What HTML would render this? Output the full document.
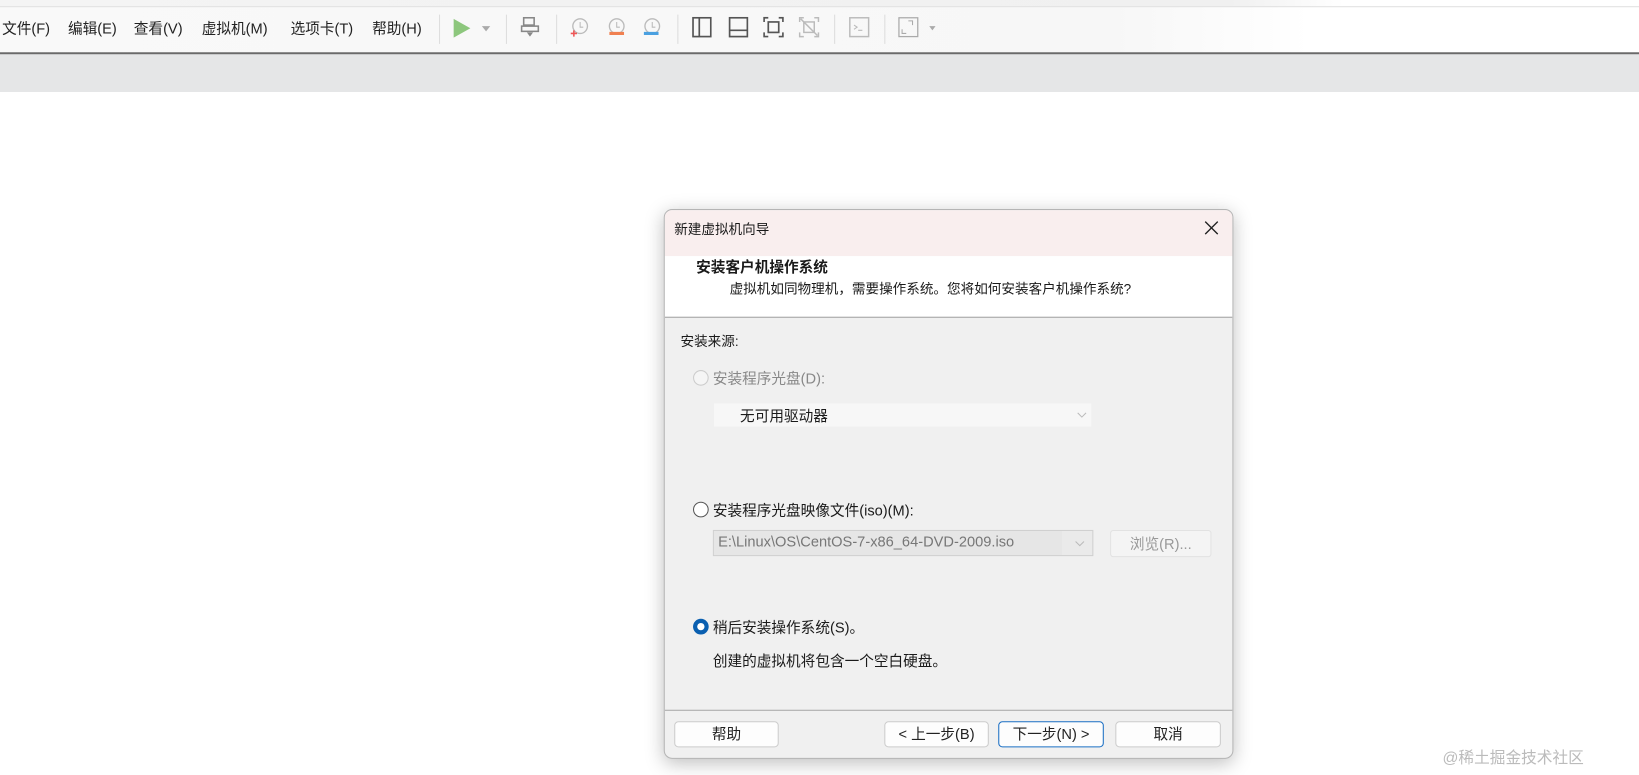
<!DOCTYPE html>
<html><head><meta charset="utf-8"><style>
*{margin:0;padding:0;box-sizing:border-box}
body{width:1639px;height:774px;overflow:hidden;background:#fff;position:relative;font-family:"Liberation Sans","Noto Sans CJK SC",sans-serif;font-size:14px;color:#1a1a1a}
#w{position:absolute;left:0;top:0;width:1568px;height:741px;transform:scale(1.04528);transform-origin:0 0}
.a{position:absolute}
.menu span{position:absolute;top:17px;font-size:14px;color:#222}
.sep{position:absolute;top:14px;width:1px;height:28px;background:#ddd}
.ic{position:absolute;top:16px;width:20px;height:20px}
.btn{position:absolute;top:690px;height:25px;background:#fdfdfd;border:1px solid #ccc;border-radius:4px;font-size:14px;text-align:center;line-height:23px;color:#222}
</style></head><body><div id="w">
<div class="a" style="left:0;top:0;width:1568px;height:6px;background:linear-gradient(90deg,#f4f4f4 0%,#f0f0f0 75%,#fff 82%)"></div>
<div class="a" style="left:0;top:6px;width:1568px;height:1px;background:#ddd"></div>
<div class="a" style="left:0;top:7px;width:1568px;height:44px;background:linear-gradient(90deg,#f9f9f9 0%,#f7f7f7 68%,#fff 80%)"></div>
<div class="menu">
<span style="left:2px">文件(F)</span><span style="left:65px">编辑(E)</span><span style="left:128px">查看(V)</span><span style="left:193px">虚拟机(M)</span><span style="left:278px">选项卡(T)</span><span style="left:356px">帮助(H)</span>
</div>
<div class="sep" style="left:420px"></div>
<svg class="a" style="left:432px;top:17px" width="40" height="20"><polygon points="2,1 18,10 2,19" fill="#8dc77d"/><polygon points="29,8 37,8 33,13" fill="#aaa"/></svg>
<div class="sep" style="left:484px"></div>
<svg class="ic" style="left:498px"><rect x="3" y="1" width="10" height="7" fill="none" stroke="#888" stroke-width="1.5"/><rect x="1" y="9" width="16" height="5" fill="none" stroke="#888" stroke-width="1.5"/><polygon points="6,15 12,15 9,19" fill="#888"/></svg>
<div class="sep" style="left:532px"></div>
<svg class="ic" style="left:545px"><circle cx="10" cy="9" r="7" fill="none" stroke="#bbb" stroke-width="1.3"/><path d="M10 5v5h3" stroke="#bbb" fill="none"/><path d="M1 16h6M4 13v6" stroke="#e55" stroke-width="1.5"/></svg>
<svg class="ic" style="left:580px"><circle cx="10" cy="9" r="7" fill="none" stroke="#bbb" stroke-width="1.3"/><path d="M10 5v5h3" stroke="#bbb" fill="none"/><path d="M3 16h14" stroke="#f08050" stroke-width="3"/></svg>
<svg class="ic" style="left:614px"><circle cx="10" cy="9" r="7" fill="none" stroke="#bbb" stroke-width="1.3"/><path d="M10 5v5h3" stroke="#bbb" fill="none"/><path d="M2 16h14" stroke="#4aa0e0" stroke-width="3"/></svg>
<div class="sep" style="left:648px"></div>
<svg class="ic" style="left:661px"><rect x="2" y="1" width="17" height="18" fill="none" stroke="#555" stroke-width="1.6"/><path d="M8 1v18" stroke="#555" stroke-width="1.6"/></svg>
<svg class="ic" style="left:696px"><rect x="2" y="1" width="17" height="18" fill="none" stroke="#555" stroke-width="1.6"/><path d="M2 13h17" stroke="#555" stroke-width="1.6"/></svg>
<svg class="ic" style="left:730px"><path d="M1 5V1h4M15 1h4v4M19 15v4h-4M5 19H1v-4" fill="none" stroke="#555" stroke-width="1.6"/><rect x="5" y="5" width="10" height="10" fill="none" stroke="#555" stroke-width="1.6"/></svg>
<svg class="ic" style="left:764px"><path d="M1 5V1h4M15 1h4v4M19 15v4h-4M5 19H1v-4M2 2l16 16" fill="none" stroke="#bbb" stroke-width="1.4"/><rect x="5" y="5" width="10" height="10" fill="none" stroke="#bbb" stroke-width="1.4"/></svg>
<div class="sep" style="left:798px"></div>
<svg class="ic" style="left:812px"><rect x="1" y="1" width="18" height="18" fill="none" stroke="#bbb" stroke-width="1.4"/><path d="M5 8l3 2-3 2M9 13h4" stroke="#bbb" fill="none"/></svg>
<div class="sep" style="left:846px"></div>
<svg class="ic" style="left:859px;width:40px"><rect x="1" y="1" width="18" height="18" fill="none" stroke="#aaa" stroke-width="1.2"/><path d="M10 4h4v4M4 12v4h4" stroke="#aaa" fill="none"/><polygon points="30,9 36,9 33,13" fill="#aaa"/></svg>
<div class="a" style="left:0;top:50px;width:1568px;height:2px;background:#6a6a6a"></div>
<div class="a" style="left:0;top:52px;width:1568px;height:36px;background:#e5e6e7"></div>

<div class="a" style="left:635px;top:200px;width:545px;height:526px;border:1px solid #b5b5b5;border-radius:8px;background:#f0f0f0;box-shadow:0 4px 18px rgba(0,0,0,.25);overflow:hidden">
 <div class="a" style="left:0;top:0;width:543px;height:44px;background:#f9eeee"></div>
 <div class="a" style="left:9px;top:8px;font-size:13px">新建虚拟机向导</div>
 <svg class="a" style="left:516px;top:10px" width="14" height="14"><path d="M1 1l12 12M13 1L1 13" stroke="#222" stroke-width="1.3"/></svg>
 <div class="a" style="left:0;top:44px;width:543px;height:59px;background:#fff;border-bottom:1px solid #a0a0a0"></div>
 <div class="a" style="left:30px;top:44px;font-size:14px;font-weight:bold">安装客户机操作系统</div>
 <div class="a" style="left:62px;top:65px;font-size:13px">虚拟机如同物理机，需要操作系统。您将如何安装客户机操作系统?</div>
 <div class="a" style="left:15px;top:115px;font-size:13px">安装来源:</div>
 <div class="a" style="left:27px;top:153px;width:15px;height:15px;border:1px solid #ccc;border-radius:50%;background:#f5f5f5"></div>
 <div class="a" style="left:46px;top:151px;font-size:14px;color:#888">安装程序光盘(D):</div>
 <div class="a" style="left:46px;top:184px;width:363px;height:24px;background:#f7f7f7;border:1px solid #f0f0f0"></div>
 <div class="a" style="left:72px;top:187px;font-size:14px">无可用驱动器</div>
 <svg class="a" style="left:394px;top:193px" width="10" height="6"><path d="M1 1l4 4 4-4" stroke="#bbb" fill="none"/></svg>
 <div class="a" style="left:27px;top:279px;width:15px;height:15px;border:1px solid #555;border-radius:50%;background:#fff"></div>
 <div class="a" style="left:46px;top:277px;font-size:14px">安装程序光盘映像文件(iso)(M):</div>
 <div class="a" style="left:46px;top:306px;width:364px;height:25px;background:#eaeaea;border:1px solid #d0d0d0"></div>
 <div class="a" style="left:47px;top:307px;width:333px;height:23px;background:#e6e6e6"></div>
 <div class="a" style="left:51px;top:309px;font-size:14px;color:#777">E:\Linux\OS\CentOS-7-x86_64-DVD-2009.iso</div>
 <svg class="a" style="left:392px;top:316px" width="10" height="6"><path d="M1 1l4 4 4-4" stroke="#bbb" fill="none"/></svg>
 <div class="a" style="left:426px;top:306px;width:97px;height:26px;background:#f4f4f4;border:1px solid #e2e2e2;border-radius:3px;font-size:14px;color:#999;text-align:center;line-height:24px">浏览(R)...</div>
 <div class="a" style="left:27px;top:391px;width:15px;height:15px;border-radius:50%;background:#fff;border:4px solid #0a5fb0"></div>
 <div class="a" style="left:46px;top:389px;font-size:14px">稍后安装操作系统(S)。</div>
 <div class="a" style="left:46px;top:421px;font-size:14px">创建的虚拟机将包含一个空白硬盘。</div>
 <div class="a" style="left:0;top:478px;width:543px;height:1px;background:#a8a8a8"></div>
</div>
<div class="btn" style="left:645px;width:100px">帮助</div>
<div class="btn" style="left:846px;width:100px">&lt; 上一步(B)</div>
<div class="btn" style="left:955px;width:101px;border-color:#1a6fc4">下一步(N) &gt;</div>
<div class="btn" style="left:1067px;width:101px">取消</div>
<div class="a" style="left:1380px;top:714px;font-size:15px;color:#bbb">@稀土掘金技术社区</div>
</div></body></html>
